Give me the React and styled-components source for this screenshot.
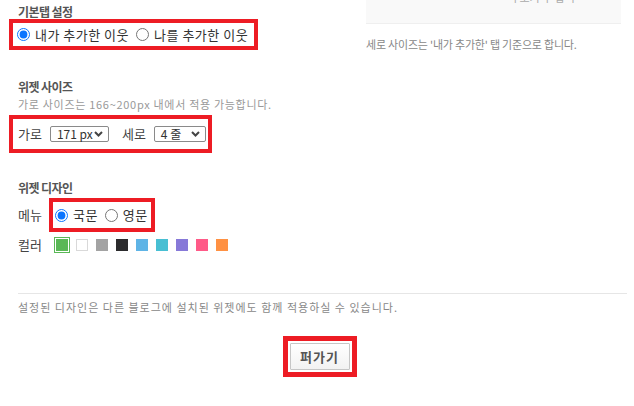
import React from 'react'
import styled, { createGlobalStyle } from 'styled-components'

const GlobalStyle = createGlobalStyle`
  html, body {
    margin: 0;
    padding: 0;
    background: #fff;
  }
  body {
    font-family: 'Noto Sans CJK KR', 'Noto Sans', sans-serif;
    color: #555;
  }
`

const swatches = [
  '#5ab856',
  '#ffffff',
  '#a3a3a3',
  '#2b2b2d',
  '#5fb4e6',
  '#48bfd3',
  '#8779d8',
  '#ff5a88',
  '#ff9143'
]

function Chevron() {
  return (
    <svg width="9" height="6" viewBox="0 0 9 6">
      <polyline points="1,1 4.5,4.5 8,1" fill="none" stroke="#444" strokeWidth="2" />
    </svg>
  )
}

export default function App() {
  return (
    <Page>
      <GlobalStyle />
      <TopRow>
        <LeftCol>
          <Heading>기본탭 설정</Heading>
          <Highlight $border={4} $pad="0 6px 0 4px" $height={23} $offset={-1}>
            <RadioLabel>
              <Radio name="tab" defaultChecked />
              내가 추가한 이웃
            </RadioLabel>
            <RadioLabel>
              <Radio name="tab" />
              나를 추가한 이웃
            </RadioLabel>
          </Highlight>

          <Heading $top={29}>위젯 사이즈</Heading>
          <SubText>가로 사이즈는 166~200px 내에서 적용 가능합니다.</SubText>
          <Highlight $border={4} $pad="0 2px 0 5px" $height={30} $offset={3}>
            <FieldLabel>가로</FieldLabel>
            <FakeSelect $width={59}>
              171 px
              <Chevron />
            </FakeSelect>
            <FieldLabel $gap={13}>세로</FieldLabel>
            <FakeSelect $width={52}>
              4 줄
              <Chevron />
            </FakeSelect>
          </Highlight>

          <Heading $top={27}>위젯 디자인</Heading>
          <MenuRow>
            <FieldLabel>메뉴</FieldLabel>
            <Highlight $border={4} $pad="0 3px 0 2px" $height={26} $inline>
              <RadioLabel $small>
                <Radio name="lang" defaultChecked />
                국문
              </RadioLabel>
              <RadioLabel $small>
                <Radio name="lang" />
                영문
              </RadioLabel>
            </Highlight>
          </MenuRow>
          <ColorRow>
            <FieldLabel>컬러</FieldLabel>
            <Swatches>
              {swatches.map((c, i) => (
                <Swatch key={c} $color={c} $selected={i === 0} $light={c === '#ffffff'} />
              ))}
            </Swatches>
          </ColorRow>
        </LeftCol>

        <RightCol>
          <Preview>
            <PreviewText>더 보기 수 합니</PreviewText>
          </Preview>
          <Note>세로 사이즈는 '내가 추가한' 탭 기준으로 합니다.</Note>
        </RightCol>
      </TopRow>

      <Divider />
      <Note $wide>설정된 디자인은 다른 블로그에 설치된 위젯에도 함께 적용하실 수 있습니다.</Note>

      <ButtonRow>
        <Highlight $border={5} $pad="2px" $inline>
          <Button>퍼가기</Button>
        </Highlight>
      </ButtonRow>
    </Page>
  )
}

const Page = styled.div`
  width: 634px;
  height: 406px;
  box-sizing: border-box;
  padding: 0 7px 0 18px;
  overflow: hidden;
  display: flex;
  flex-direction: column;
`

const TopRow = styled.div`
  display: grid;
  grid-template-columns: 348px 255px;
  align-items: start;
`

const LeftCol = styled.div`
  display: flex;
  flex-direction: column;
  align-items: flex-start;
`

const RightCol = styled.div`
  display: flex;
  flex-direction: column;
`

const Heading = styled.h3`
  margin: ${(p) => p.$top || 4}px 0 0;
  font-size: 12px;
  line-height: 16px;
  font-weight: 700;
  letter-spacing: -0.6px;
  color: #555;
`

const SubText = styled.p`
  margin: 1px 0 0;
  font-size: 11px;
  line-height: 16px;
  color: #999;
  letter-spacing: 0.7px;
  white-space: nowrap;
`

const Highlight = styled.div`
  display: ${(p) => (p.$inline ? 'inline-flex' : 'flex')};
  align-items: center;
  box-sizing: content-box;
  height: ${(p) => (p.$height ? `${p.$height}px` : 'auto')};
  padding: ${(p) => p.$pad};
  border: ${(p) => p.$border}px solid #ed1c24;
  margin: ${(p) => p.$offset || 0}px 0 0 ${(p) => (p.$inline ? 0 : -9)}px;
`

const RadioLabel = styled.label`
  display: inline-flex;
  align-items: center;
  gap: 5px;
  font-size: 13px;
  line-height: 16px;
  color: #333;
  letter-spacing: 0.5px;
  white-space: nowrap;
  & + & {
    margin-left: ${(p) => (p.$small ? 7 : 10)}px;
  }
`

const Radio = styled.input.attrs({ type: 'radio' })`
  width: 13px;
  height: 13px;
  margin: 0;
  accent-color: #0a75ff;
`

const FieldLabel = styled.span`
  font-size: 13px;
  line-height: 16px;
  color: #444;
  white-space: nowrap;
  margin-left: ${(p) => p.$gap || 0}px;
  margin-right: 8px;
`

const FakeSelect = styled.div`
  width: ${(p) => p.$width}px;
  height: 16px;
  box-sizing: border-box;
  border: 1px solid #8a8a8a;
  border-radius: 2px;
  display: flex;
  align-items: center;
  justify-content: space-between;
  padding: 0 5px 0 6px;
  font-size: 12px;
  color: #333;
  line-height: 14px;
  white-space: nowrap;
`

const MenuRow = styled.div`
  display: flex;
  align-items: center;
  margin-top: 2px;
  & > span {
    margin-right: 7px;
  }
`

const ColorRow = styled.div`
  display: flex;
  align-items: center;
  margin-top: 5px;
  height: 16px;
  & > span {
    margin-right: 14px;
  }
`

const Swatches = styled.div`
  display: flex;
  align-items: center;
  gap: 8px;
`

const Swatch = styled.span`
  width: 12px;
  height: 12px;
  box-sizing: border-box;
  background: ${(p) => p.$color};
  border: ${(p) => (p.$light ? '1px solid #d9d9d9' : 'none')};
  outline: ${(p) => (p.$selected ? `1px solid ${p.$color}` : 'none')};
  outline-offset: 1px;
`

const Preview = styled.div`
  height: 24px;
  box-sizing: border-box;
  background: #f9f9f9;
  border-bottom: 1px solid #efefef;
  overflow: hidden;
  display: flex;
  justify-content: flex-end;
  padding-right: 46px;
`

const PreviewText = styled.span`
  font-size: 11px;
  line-height: 12px;
  margin-top: -9px;
  color: #aaa;
`

const Note = styled.p`
  margin: ${(p) => (p.$wide ? 5 : 12)}px 0 0;
  font-size: 11px;
  line-height: 16px;
  color: #888;
  white-space: nowrap;
  letter-spacing: ${(p) => (p.$wide ? 1 : -0.2)}px;
`

const Divider = styled.hr`
  margin: 40px 0 0;
  border: 0;
  height: 1px;
  background: #e6e6e6;
`

const ButtonRow = styled.div`
  display: flex;
  justify-content: center;
  padding-right: 6px;
  margin-top: 21px;
`

const Button = styled.button`
  width: 60px;
  height: 27px;
  border: 1px solid #c6c6c6;
  border-radius: 1px;
  background: linear-gradient(#ffffff, #f2f2f2);
  font-family: inherit;
  font-size: 13px;
  font-weight: 700;
  letter-spacing: 1px;
  color: #555;
  padding: 0;
`
